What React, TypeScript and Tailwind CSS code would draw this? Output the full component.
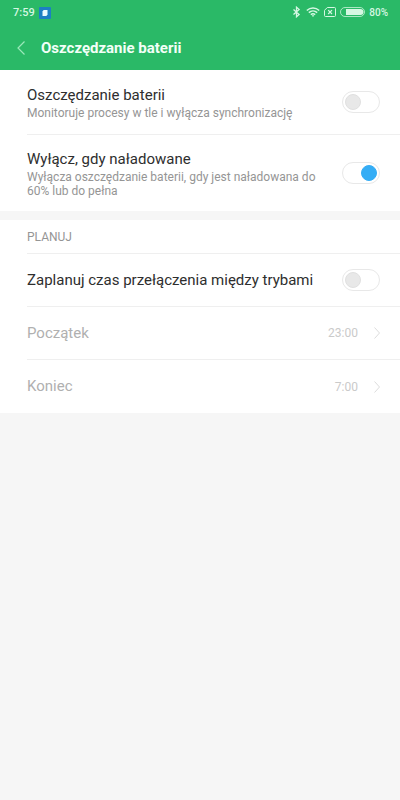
import { useState } from 'react';

interface SwitchRowProps {
  id: string;
  title: string;
  description?: string;
  checked: boolean;
  onChange: (value: boolean) => void;
}

interface TimeRowProps {
  label: string;
  value: string;
  disabled: boolean;
}

function StatusBar() {
  return (
    <div className="flex h-[26px] items-center justify-between pr-3 pl-[13px] text-[11px] font-medium text-[#d5f7e2]">
      <div className="flex items-center gap-1">
        <span>7:59</span>
        <svg className="size-3" viewBox="0 0 12 12" aria-hidden="true">
          <rect width="12" height="12" rx="1" fill="#1c7fc4" />
          <path d="M4.6 3h3.9v4.4L7.4 9H3.5V4.4z" fill="#e9fbff" />
        </svg>
      </div>
      <div className="flex items-center gap-1 pb-[2px]">
        {/* Bluetooth */}
        <svg className="h-3 w-3" viewBox="0 0 12 12" fill="none" stroke="currentColor" strokeWidth="1.3" aria-hidden="true">
          <path d="M3.500 3.600 9.100 8.500 6.500 10.800V1.200l2.600 2.300L3.500 8.400" />
        </svg>
        {/* Wi-Fi */}
        <svg className="h-3 w-[14px]" viewBox="0 0 14 12" fill="none" stroke="currentColor" strokeWidth="1.5" aria-hidden="true">
          <path d="M.8 4.5C4.4 1.2 9.6 1.2 13.2 4.5" />
          <path d="M2.8 6.6c2.4-2.2 6-2.2 8.4 0" />
          <path d="M4.8 8.6c1.3-1.1 3.1-1.1 4.4 0" />
          <path d="M5.8 9.6 7 10.9l1.2-1.3C7.5 9 6.5 9 5.8 9.6z" fill="currentColor" stroke="none" />
        </svg>
        {/* No SIM */}
        <svg className="h-3 w-3" viewBox="0 0 12 12" fill="none" stroke="currentColor" aria-hidden="true">
          <path d="M3.3 1.5H10.5q1 0 1 1V9.5q0 1-1 1H1.5q-1 0-1-1V4.3z" />
          <path d="m4.200 4.200 3.800 3.800M8 4.200 4.200 8" strokeWidth="1.2" />
        </svg>
        {/* Battery */}
        <svg className="h-3 w-[25px]" viewBox="0 0 25 12" fill="none" aria-hidden="true">
          <rect x=".5" y="1.5" width="24" height="9" rx="4.5" stroke="currentColor" strokeOpacity=".75" />
          <path d="M6 3h14.500a3 3 0 0 1 0 6H6z" fill="currentColor" />
        </svg>
        <span className="text-[10px]">80%</span>
      </div>
    </div>
  );
}

function SwitchRow({ id, title, description, checked, onChange }: SwitchRowProps) {
  return (
    <div className="flex items-center justify-between gap-6 pr-5">
      <label htmlFor={id} className="min-w-0 flex-1">
        <span className="block text-[15px] leading-[22px] text-[#2e2e2e]">{title}</span>
        {description && (
          <span className="block text-[12px] leading-[14px] text-[#959595]">{description}</span>
        )}
      </label>
      <input
        id={id}
        type="checkbox"
        role="switch"
        checked={checked}
        onChange={(e) => onChange(e.target.checked)}
        className="flex h-[22px] w-[38px] shrink-0 appearance-none items-center rounded-full border border-[#e8e8e8] bg-white px-[2px] before:block before:size-4 before:rounded-full before:border before:border-[#e0e0e0] before:bg-[#e8e8e8] checked:before:translate-x-4 checked:before:border-[#35adf5] checked:before:bg-[#35adf5]"
      />
    </div>
  );
}

function TimeRow({ label, value, disabled }: TimeRowProps) {
  return (
    <button
      type="button"
      disabled={disabled}
      className="flex h-full w-full items-center justify-between pr-5 text-left text-[15px] text-[#2e2e2e] disabled:text-[#b0b0b0]"
    >
      <span>{label}</span>
      <span className="flex items-center gap-4 text-[12px] text-[#cacaca]">
        {value}
        <svg className="h-3 w-[6px]" viewBox="0 0 6 12" fill="none" stroke="#dcdcdc" aria-hidden="true">
          <path d="m.5.5 5 5.5-5 5.5" />
        </svg>
      </span>
    </button>
  );
}

export default function App() {
  const [saver, setSaver] = useState(false);
  const [offWhenCharged, setOffWhenCharged] = useState(true);
  const [scheduled, setScheduled] = useState(false);

  return (
    <div className="min-h-screen bg-[#f6f6f6] font-['Roboto',sans-serif]">
      <header className="bg-[#2ab967]">
        <StatusBar />
        <div className="flex h-11 items-center gap-4 pl-[17px]">
          <button type="button" aria-label="Wstecz" className="text-[#9be8ba]">
            <svg className="h-[14px] w-2" viewBox="0 0 8 14" fill="none" stroke="currentColor" strokeWidth="1.2">
              <path d="M7.5.5 1 7l6.5 6.5" />
            </svg>
          </button>
          <h1 className="text-[15px] font-bold text-[#f2fff7]">Oszczędzanie baterii</h1>
        </div>
      </header>

      <main>
        <section className="divide-y divide-[#efefef] bg-white pl-[27px]">
          <div className="py-[14px]">
            <SwitchRow
              id="saver"
              title="Oszczędzanie baterii"
              description="Monitoruje procesy w tle i wyłącza synchronizację"
              checked={saver}
              onChange={setSaver}
            />
          </div>
          <div className="py-[13px]">
            <SwitchRow
              id="off-when-charged"
              title="Wyłącz, gdy naładowane"
              description="Wyłącza oszczędzanie baterii, gdy jest naładowana do 60% lub do pełna"
              checked={offWhenCharged}
              onChange={setOffWhenCharged}
            />
          </div>
        </section>

        <section className="mt-[9px] divide-y divide-[#efefef] bg-white pl-[27px]">
          <h2 className="flex h-[34px] items-center text-[12px] text-[#959595]">PLANUJ</h2>
          <div className="flex h-[53px] flex-col justify-center">
            <SwitchRow
              id="schedule"
              title="Zaplanuj czas przełączenia między trybami"
              checked={scheduled}
              onChange={setScheduled}
            />
          </div>
          <div className="h-[53px]">
            <TimeRow label="Początek" value="23:00" disabled={!scheduled} />
          </div>
          <div className="h-[53px]">
            <TimeRow label="Koniec" value="7:00" disabled={!scheduled} />
          </div>
        </section>
      </main>
    </div>
  );
}
